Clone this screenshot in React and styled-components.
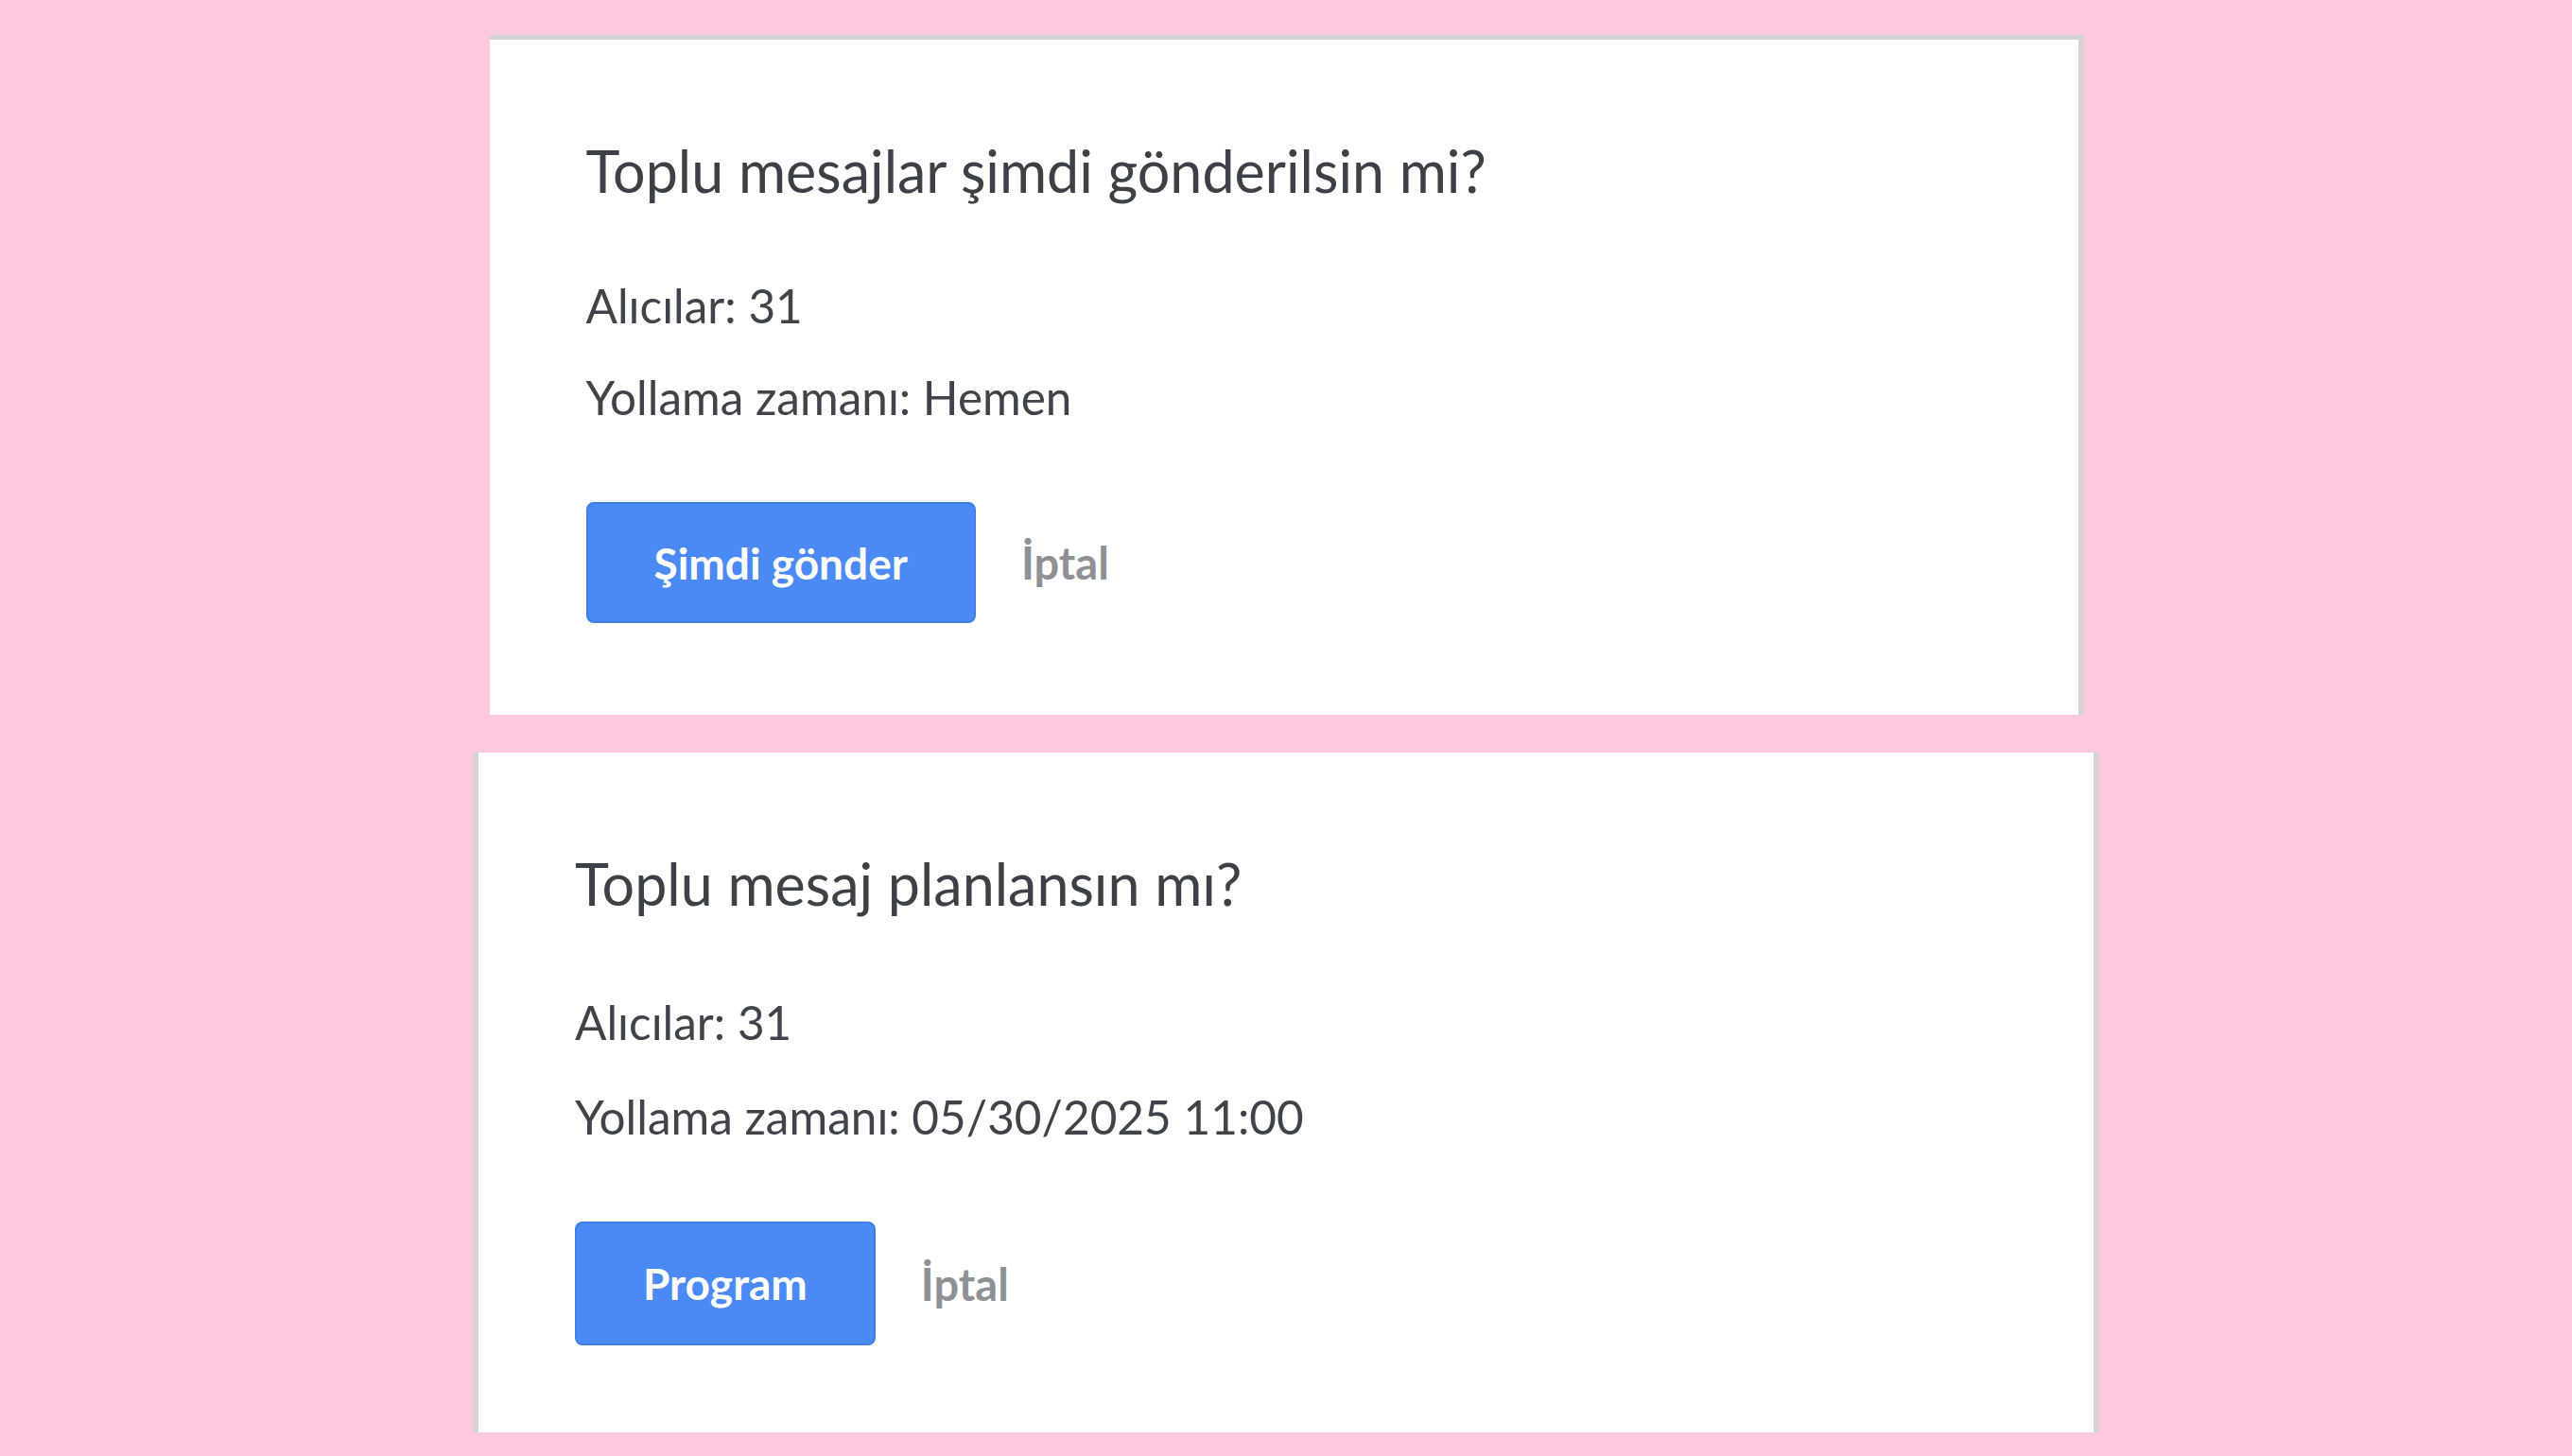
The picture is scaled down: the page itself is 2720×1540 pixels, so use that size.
import React from 'react';
import styled, { createGlobalStyle } from 'styled-components';

const GlobalStyle = createGlobalStyle`
  html, body {
    margin: 0;
    padding: 0;
    background: #fec8e0;
  }
  body {
    font-family: Lato, "Noto Sans", sans-serif;
  }
`;

const Page = styled.div`
  width: 2720px;
  height: 1540px;
  background: #fec8e0;
  display: flex;
  flex-direction: column;
  align-items: center;
  padding-top: 37px;
  gap: 40px;
  box-sizing: border-box;
`;

// kart: ekran görüntüsündeki kenarlıklar kartın yanlarında farklı
const Card = styled.div`
  width: ${p => p.width}px;
  height: 719px;
  box-sizing: border-box;
  background: #fff;
  padding: 103px 102px 0;
  display: flex;
  flex-direction: column;
  align-items: flex-start;
  border-top: ${p => (p.borderTop ? '5px solid #d4d4d4' : 'none')};
  border-left: ${p => (p.borderLeft ? '5px solid #d4d4d4' : 'none')};
  border-right: 5px solid #d4d4d4;
`;

const Title = styled.h2`
  margin: 0;
  font-size: 61px;
  line-height: 72px;
  font-weight: 400;
  color: #3c4047;
`;

const InfoList = styled.div`
  margin-top: ${p => (p.loose ? 80 : 76)}px;
  display: flex;
  flex-direction: column;
  gap: ${p => (p.loose ? 40 : 37)}px;
`;

const InfoLine = styled.div`
  font-size: 49.5px;
  line-height: 60px;
  color: #3f434a;
`;

const Actions = styled.div`
  margin-top: 81px;
  display: flex;
  align-items: center;
  gap: 48px;
`;

const PrimaryButton = styled.button`
  height: ${p => (p.tall ? 131 : 128)}px;
  padding: 0 70px;
  border: 2px solid #3f7ee6;
  border-radius: 8px;
  background: #4b8af4;
  color: #fff;
  font-family: Lato, "Noto Sans", sans-serif;
  font-size: 46px;
  font-weight: 700;
  cursor: pointer;
`;

const CancelLink = styled.span`
  font-size: 47px;
  font-weight: 700;
  color: #8d9196;
  cursor: pointer;
`;

const ConfirmCard = ({ title, recipients, when, action, width, borderTop, borderLeft, loose }) => (
  <Card width={width} borderTop={borderTop} borderLeft={borderLeft}>
    <Title>{title}</Title>
    <InfoList loose={loose}>
      <InfoLine>Alıcılar: {recipients}</InfoLine>
      <InfoLine>Yollama zamanı: {when}</InfoLine>
    </InfoList>
    <Actions>
      <PrimaryButton tall={loose}>{action}</PrimaryButton>
      <CancelLink>İptal</CancelLink>
    </Actions>
  </Card>
);

export default function App() {
  return (
    <>
      <GlobalStyle />
      <Page>
        <ConfirmCard
          width={1685}
          borderTop
          title="Toplu mesajlar şimdi gönderilsin mi?"
          recipients={31}
          when="Hemen"
          action="Şimdi gönder"
        />
        <ConfirmCard
          width={1718}
          borderLeft
          loose
          title="Toplu mesaj planlansın mı?"
          recipients={31}
          when="05/30/2025 11:00"
          action="Program"
        />
      </Page>
    </>
  );
}
